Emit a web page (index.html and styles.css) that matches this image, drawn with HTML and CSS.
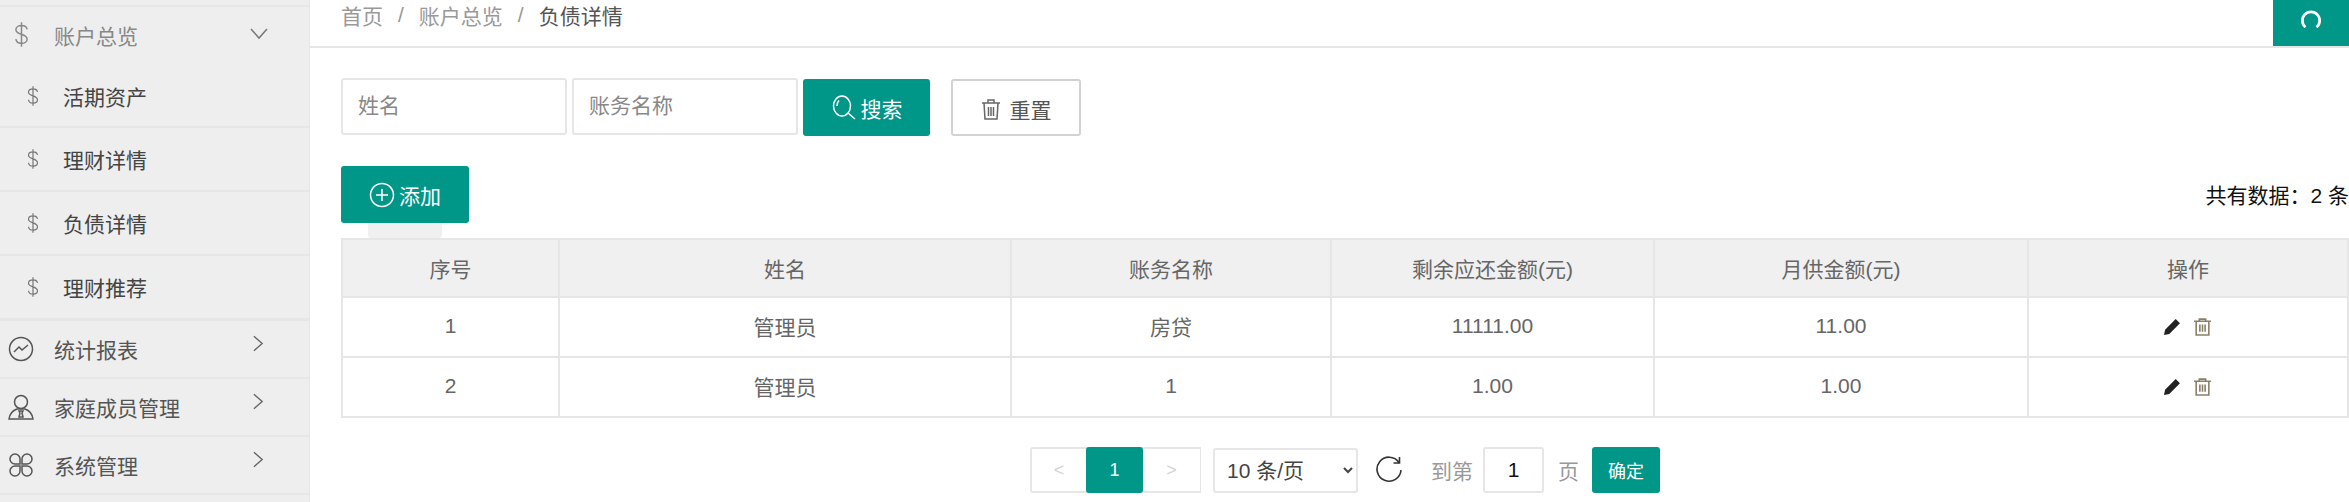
FILE: index.html
```html
<!DOCTYPE html>
<html lang="zh">
<head>
<meta charset="utf-8">
<title>负债详情</title>
<link rel="stylesheet" href="styles.css">
</head>
<body>
<div class="app">
  <aside class="side">
    <div class="side-stub"></div>
    <div class="nav-item nav-open">
      <svg class="i-dollar big" viewBox="0 0 16 26"><path d="M14 7.500C13.500 5 11 3.500 8 3.500 4.500 3.500 2 5.500 2 8c0 6 12 3.500 12 10 0 2.500-2.500 4.500-6 4.500-3.200 0-5.600-1.600-6-4.500M8 0v26"/></svg>
      <span class="nav-label">账户总览</span>
      <svg class="chev" viewBox="0 0 18 12"><path d="M1 1l8 9 8-9"/></svg>
    </div>
    <div class="sub first"><svg class="i-dollar" viewBox="0 0 16 26"><path d="M14 7.500C13.500 5 11 3.500 8 3.500 4.500 3.500 2 5.500 2 8c0 6 12 3.500 12 10 0 2.500-2.500 4.500-6 4.500-3.200 0-5.600-1.600-6-4.500M8 0v26"/></svg><span class="sub-label">活期资产</span></div>
    <div class="sub"><svg class="i-dollar" viewBox="0 0 16 26"><path d="M14 7.500C13.500 5 11 3.500 8 3.500 4.500 3.500 2 5.500 2 8c0 6 12 3.500 12 10 0 2.500-2.500 4.500-6 4.500-3.200 0-5.600-1.600-6-4.500M8 0v26"/></svg><span class="sub-label">理财详情</span></div>
    <div class="sub"><svg class="i-dollar" viewBox="0 0 16 26"><path d="M14 7.500C13.500 5 11 3.500 8 3.500 4.500 3.500 2 5.500 2 8c0 6 12 3.500 12 10 0 2.500-2.500 4.500-6 4.500-3.200 0-5.600-1.600-6-4.500M8 0v26"/></svg><span class="sub-label">负债详情</span></div>
    <div class="sub last"><svg class="i-dollar" viewBox="0 0 16 26"><path d="M14 7.500C13.500 5 11 3.500 8 3.500 4.500 3.500 2 5.500 2 8c0 6 12 3.500 12 10 0 2.500-2.500 4.500-6 4.500-3.200 0-5.600-1.600-6-4.500M8 0v26"/></svg><span class="sub-label">理财推荐</span></div>
    <div class="nav-item">
      <svg class="nav-ico" viewBox="0 0 26 26"><circle cx="13" cy="13" r="11.500"/><path d="M6 16l5-5 3 3 6-5"/></svg>
      <span class="nav-label">统计报表</span>
      <svg class="chev-r" viewBox="0 0 12 18"><path d="M1 1l9 8-9 8"/></svg>
    </div>
    <div class="nav-item">
      <svg class="nav-ico" viewBox="0 0 26 26"><circle cx="13" cy="8" r="6.500"/><path d="M1 25c1-7 5-9 8-10h8c3 1 7 3 8 10zM11 17h4l-1 2 1 4h-4l1-4z"/></svg>
      <span class="nav-label">家庭成员管理</span>
      <svg class="chev-r" viewBox="0 0 12 18"><path d="M1 1l9 8-9 8"/></svg>
    </div>
    <div class="nav-item">
      <svg class="nav-ico" viewBox="0 0 26 26"><path d="M12 12H7a5 5 0 1 1 5-5zM14 12h5a5 5 0 1 0-5-5zM12 14H7a5 5 0 1 0 5 5zM14 14h5a5 5 0 1 1-5 5z"/></svg>
      <span class="nav-label">系统管理</span>
      <svg class="chev-r" viewBox="0 0 12 18"><path d="M1 1l9 8-9 8"/></svg>
    </div>
  </aside>
  <main class="main">
    <header class="crumbs">
      <span class="crumb">首页</span><span class="sep">/</span><span class="crumb">账户总览</span><span class="sep">/</span><span class="crumb-cur">负债详情</span>
      <button class="refresh-tab" type="button"><svg viewBox="0 0 16 16"><path d="M4 14A6.300 6.300 0 1 1 12 14"/></svg></button>
    </header>
    <section class="content">
      <form class="search">
        <input class="field" placeholder="姓名">
        <input class="field" placeholder="账务名称">
        <button class="btn btn-green btn-search" type="button">
          <svg class="i-search" viewBox="0 0 26 26"><ellipse cx="11" cy="11" rx="8.500" ry="10"/><path d="M6 11c0-2 .5-4 2-5.500M17 18l7 6"/></svg>搜索
        </button>
        <button class="btn btn-plain" type="button">
          <svg class="i-trash" viewBox="0 0 20 22"><path d="M1 5h18M7 5V2h6v3M3 5l1 16h12l1-16M7.500 9v9M10 9v9M12.500 9v9"/></svg>重置
        </button>
      </form>
      <div class="toolbar">
        <button class="btn btn-green btn-add" type="button">
          <svg class="i-add" viewBox="0 0 26 26"><circle cx="13" cy="13" r="11.500"/><path d="M13 7v12M7 13h12"/></svg>添加
        </button>
        <span class="total">共有数据：2 条</span>
      </div>
      <div class="stub"></div>
      <table class="grid">
        <colgroup>
          <col class="c1"><col class="c2"><col class="c3"><col class="c4"><col class="c5"><col>
        </colgroup>
        <thead>
          <tr><th>序号</th><th>姓名</th><th>账务名称</th><th>剩余应还金额(元)</th><th>月供金额(元)</th><th>操作</th></tr>
        </thead>
        <tbody>
          <tr><td>1</td><td>管理员</td><td>房贷</td><td>11111.00</td><td>11.00</td>
            <td><span class="ops">
              <svg class="i-pen" viewBox="0 0 16 16"><path d="M0 16l1-5L11 1l4 4L5 15z"/></svg>
              <svg class="i-del" viewBox="0 0 18 18"><path d="M1 4h16M6 4V2h6v2M3 4v13h12V4M6.500 7v7M9 7v7M11.500 7v7"/></svg>
            </span></td></tr>
          <tr><td>2</td><td>管理员</td><td>1</td><td>1.00</td><td>1.00</td>
            <td><span class="ops">
              <svg class="i-pen" viewBox="0 0 16 16"><path d="M0 16l1-5L11 1l4 4L5 15z"/></svg>
              <svg class="i-del" viewBox="0 0 18 18"><path d="M1 4h16M6 4V2h6v2M3 4v13h12V4M6.500 7v7M9 7v7M11.500 7v7"/></svg>
            </span></td></tr>
        </tbody>
      </table>
      <nav class="pager">
        <div class="pages">
          <span class="pg pg-first pg-off">&lt;</span><span class="pg pg-cur">1</span><span class="pg pg-off">&gt;</span>
        </div>
        <select class="limit"><option>10 条/页</option></select>
        <svg class="i-reload" viewBox="0 0 28 28"><path d="M24 6.500A12 12 0 1 0 26 14M24.500 1v6h-6"/></svg>
        <span class="lbl lbl-to">到第</span>
        <input class="jump" value="1">
        <span class="lbl lbl-page">页</span>
        <button class="btn-ok" type="button">确定</button>
      </nav>
    </section>
  </main>
</div>
</body>
</html>
```
FILE: styles.css
```css
* { box-sizing: border-box; }
html, body { margin: 0; padding: 0; height: 100%; overflow: hidden; background: #fff; }
body { font-family: "Liberation Sans", "Noto Sans CJK SC", sans-serif; font-size: 21px; color: #666; }
svg { fill: none; stroke: currentColor; stroke-width: 1.5; flex: none; }
button, input, select { font: inherit; }

.app { display: flex; height: 502px; }

/* sidebar */
.side { width: 310px; flex: none; background: #eee; border-right: 1px solid #e6e6e6; color: #555; }
.side-stub { height: 7px; border-bottom: 2px solid #e6e6e6; }
.nav-item { position: relative; display: flex; align-items: center; height: 58px; padding-left: 8px; border-bottom: 2px solid #e6e6e6; }
.nav-open { height: 60px; border-bottom: 0; color: #888; align-items: flex-start; padding-top: 13px; }
.nav-ico { width: 26px; height: 26px; color: #555; }
.nav-label { margin-left: 20px; }
.nav-open .nav-label { margin-left: 25px; }
.i-dollar { width: 12px; height: 20px; color: #777; stroke-width: 1.6; }
.i-dollar.big { width: 15px; height: 25px; margin: 2px 0 0 6px; color: #888; }
.chev { position: absolute; right: 41px; top: 21px; width: 18px; height: 12px; color: #777; }
.chev-r { position: absolute; right: 45px; top: 14px; width: 11px; height: 17px; color: #666; }
.sub { display: flex; align-items: center; height: 64px; padding-left: 27px; border-bottom: 2px solid #e6e6e6; color: #444; }
.sub.first { height: 61px; padding-bottom: 1px; }
.sub.last { height: 65px; border-bottom-width: 3px; }
.sub-label { margin-left: 24px; }

/* main */
.main { flex: 1; min-width: 0; }
.crumbs { position: relative; display: flex; align-items: center; height: 48px; padding: 0 0 16px 31px; border-bottom: 2px solid #e6e6e6; color: #999; }
.sep { margin: 0 15px; color: #999; }
.crumb-cur { color: #555; }
.refresh-tab { position: absolute; right: 0; top: 0; display: flex; align-items: center; justify-content: center; width: 76px; height: 46px; border: 0; padding: 0 0 8px; background: #009688; color: #fff; }
.refresh-tab svg { width: 22px; height: 22px; stroke-width: 2; }
.content { padding: 30px 0 0 31px; }

.search { display: flex; align-items: flex-start; height: 58px; }
.field { width: 226px; height: 57px; margin-right: 5px; padding: 0 15px 2px; border: 2px solid #e6e6e6; border-radius: 3px; color: #666; background: #fff; }
.field::placeholder { color: #888; opacity: 1; }
.btn { display: inline-flex; align-items: center; justify-content: center; height: 57px; border-radius: 3px; padding: 0; border: 0; }
.btn-green { background: #009688; color: #fff; }
.btn-search { width: 127px; margin: 1px 21px 0 0; }
.btn-plain { width: 130px; margin-top: 1px; background: #fff; border: 2px solid #d2d2d2; color: #555; padding-top: 3px; }
.i-search { width: 26px; height: 26px; margin-right: 4px; }
.i-trash { width: 20px; height: 22px; margin-right: 9px; color: #666; }
.i-add { width: 26px; height: 26px; margin-right: 4px; }

.toolbar { display: flex; justify-content: space-between; align-items: center; margin-top: 30px; height: 57px; }
.btn-add { width: 128px; }
.total { color: #111; padding-bottom: 2px; }
.stub { width: 74px; height: 15px; margin-left: 27px; background: #f0f0f0; border-radius: 0 0 3px 3px; }

.grid { width: 100%; table-layout: fixed; border-collapse: collapse; border: 2px solid #e6e6e6; }
.c1 { width: 217px; }
.c2 { width: 452px; }
.c3 { width: 320px; }
.c4 { width: 323px; }
.c5 { width: 374px; }
.grid th, .grid td { height: 60px; padding: 0 0 2px; text-align: center; font-weight: 400; border: 2px solid #e6e6e6; color: #666; }
.grid th { height: 58px; padding: 0; background: #f0f0f0; }
.ops { display: inline-flex; align-items: center; gap: 12px; vertical-align: middle; margin-bottom: 2px; }
.i-pen { width: 17px; height: 17px; fill: #222; stroke: none; }
.i-del { width: 19px; height: 19px; color: #8a7f68; }

.pager { display: flex; align-items: center; height: 46px; margin-top: 29px; margin-left: 689px; }
.pages { display: flex; height: 46px; border: 2px solid #e6e6e6; border-right-width: 1px; border-radius: 3px 0 0 3px; }
.pg { display: flex; align-items: center; justify-content: center; width: 57px; font-size: 18px; }
.pg-first { width: 54px; }
.pg-off { color: #d2d2d2; }
.pg-cur { margin: -2px 0; background: #009688; color: #fff; border-radius: 3px; }
.limit { width: 145px; height: 45px; margin-left: 12px; padding: 0 8px; border: 2px solid #e6e6e6; border-radius: 3px; background: #fff; color: #444; }
.i-reload { width: 28px; height: 28px; margin-left: 17px; color: #333; stroke-width: 1.6; }
.lbl { color: #999; }
.lbl-to { margin-left: 28px; }
.jump { width: 61px; height: 46px; margin-left: 10px; text-align: center; border: 2px solid #e6e6e6; border-radius: 3px; color: #111; background: #fff; }
.lbl-page { margin-left: 14px; }
.btn-ok { width: 68px; height: 46px; margin-left: 13px; border: 0; padding: 0; border-radius: 3px; background: #009688; color: #fff; font-size: 18px; }
```
